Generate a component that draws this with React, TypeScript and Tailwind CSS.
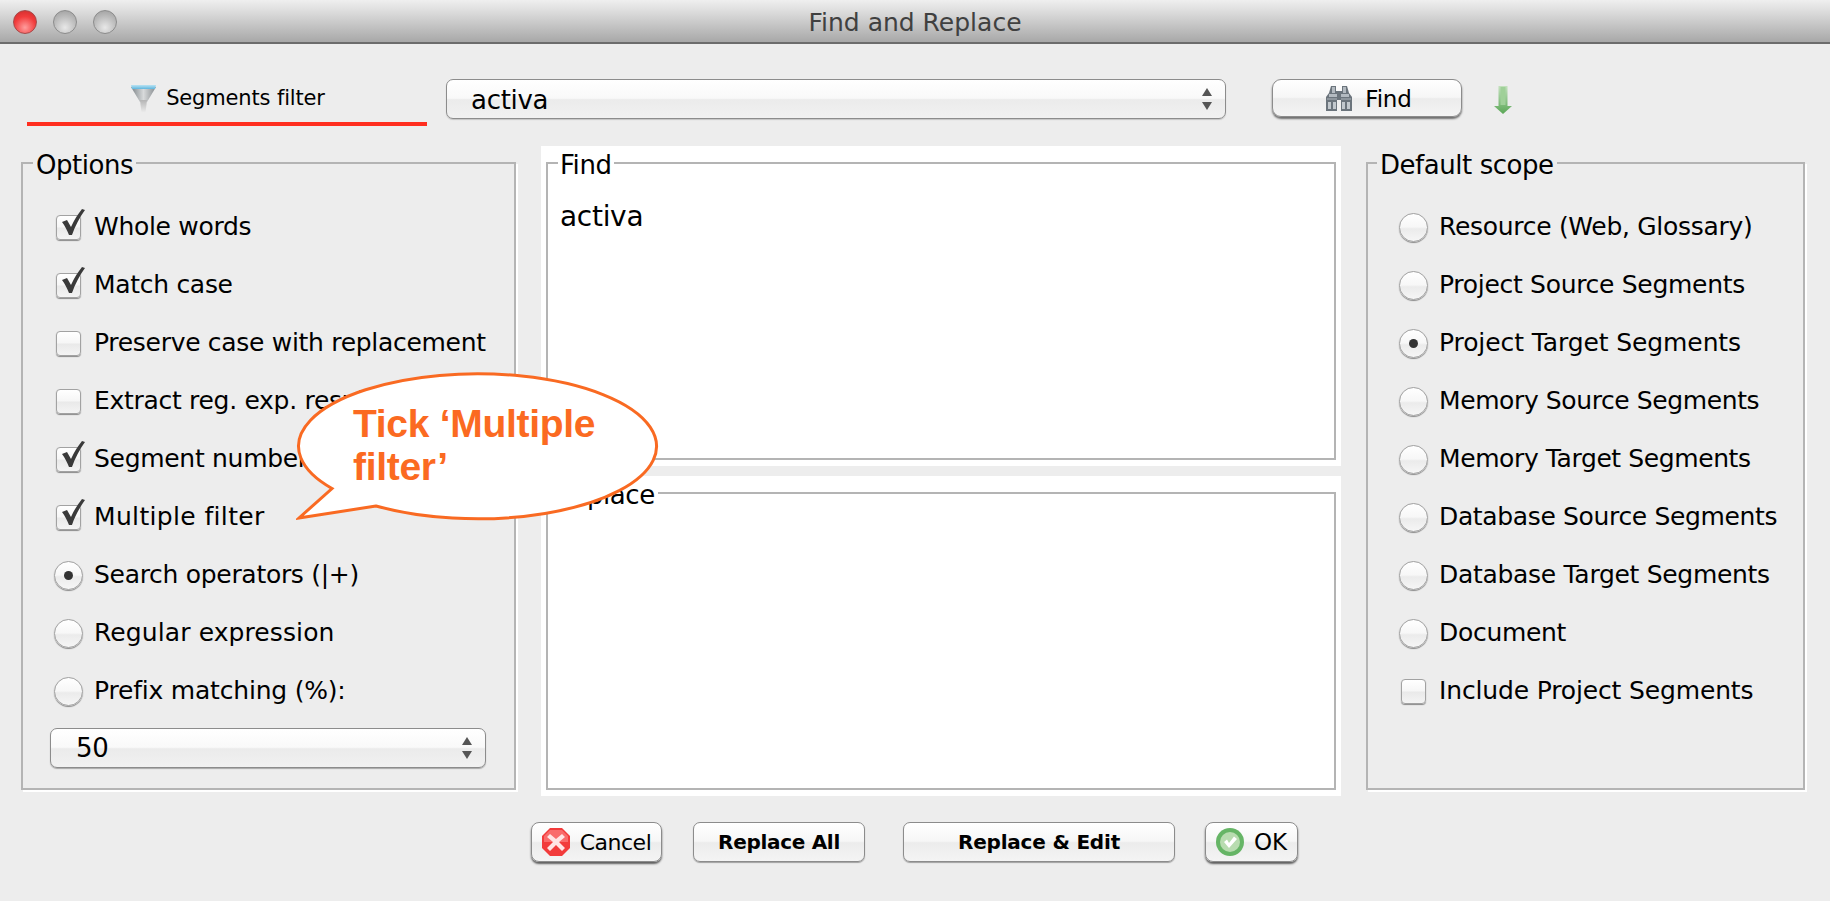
import React from 'react';

const leftRows = [
  { kind: 'check', on: true, label: 'Whole words' },
  { kind: 'check', on: true, label: 'Match case' },
  { kind: 'check', on: false, label: 'Preserve case with replacement' },
  { kind: 'check', on: false, label: 'Extract reg. exp. results' },
  { kind: 'check', on: true, label: 'Segment numbers' },
  { kind: 'check', on: true, label: 'Multiple filter', track: 'tracking-[0.35px]' },
  { kind: 'radio', on: true, label: 'Search operators (|+)' },
  { kind: 'radio', on: false, label: 'Regular expression', track: 'tracking-[0.1px]' },
  { kind: 'radio', on: false, label: 'Prefix matching (%):', track: 'tracking-[-0.2px]' },
];

const rightRows = [
  { kind: 'radio', on: false, label: 'Resource (Web, Glossary)' },
  { kind: 'radio', on: false, label: 'Project Source Segments' },
  { kind: 'radio', on: true, label: 'Project Target Segments', track: 'tracking-[-0.1px]' },
  { kind: 'radio', on: false, label: 'Memory Source Segments', track: 'tracking-[-0.4px]' },
  { kind: 'radio', on: false, label: 'Memory Target Segments', track: 'tracking-[-0.4px]' },
  { kind: 'radio', on: false, label: 'Database Source Segments', track: 'tracking-[-0.35px]' },
  { kind: 'radio', on: false, label: 'Database Target Segments' },
  { kind: 'radio', on: false, label: 'Document' },
  { kind: 'check', on: false, label: 'Include Project Segments', track: 'tracking-[-0.15px]' },
];

const Check = ({ on }: { on: boolean }) => (
  <span className="relative block w-[25px] h-[25px] rounded-[4px] border border-[#a2a2a2] bg-[linear-gradient(#ffffff,#f6f6f6_48%,#e9e9e9_52%,#f4f4f4)] shadow-[0_1px_1px_#8a8a8a]">
    {on && (
      <svg className="absolute left-[4px] top-[-8px]" width="26" height="28" viewBox="0 0 26 28">
        <path d="M1 14 L6 12 L10 19 C13 12 17 6 21 1 L24 2 C19 9 14 18 11 27 L8 27 C6 22 4 18 1 14 Z" fill="#3a3a3a" />
      </svg>
    )}
  </span>
);

const Radio = ({ on }: { on: boolean }) => (
  <span className="flex items-center justify-center w-[29px] h-[29px] rounded-full border border-[#a0a0a0] bg-[linear-gradient(#ffffff,#f7f7f7_48%,#ebebeb_55%,#f6f6f6)] shadow-[0_1px_1px_#8a8a8a]">
    {on && <span className="w-[9px] h-[9px] rounded-full bg-[#333333]" />}
  </span>
);

const Row = ({ kind, on, label, track }: { kind: string; on: boolean; label: string; track?: string }) => (
  <div className="flex items-center h-[58px]">
    <span className="flex items-center justify-center w-[30px]">
      {kind === 'check' ? <Check on={on} /> : <Radio on={on} />}
    </span>
    <span className={`ml-[11px] whitespace-nowrap text-[25px] text-black ${track ?? 'tracking-[-0.3px]'}`}>{label}</span>
  </div>
);

const UpDown = () => (
  <svg width="12" height="24" viewBox="0 0 12 24">
    <path d="M6 1 L11 9 L1 9 Z" fill="#555555" />
    <path d="M1 15 L11 15 L6 23 Z" fill="#555555" />
  </svg>
);

const Funnel = () => (
  <svg width="25" height="28" viewBox="0 0 25 28">
    <defs>
      <linearGradient id="fb" x1="0" y1="0" x2="1" y2="0">
        <stop offset="0" stopColor="#7d8488" />
        <stop offset="0.5" stopColor="#d8dadb" />
        <stop offset="1" stopColor="#868b8e" />
      </linearGradient>
      <linearGradient id="ft" x1="0" y1="0" x2="0" y2="1">
        <stop offset="0" stopColor="#b9e3f3" />
        <stop offset="1" stopColor="#5fb6de" />
      </linearGradient>
      <linearGradient id="fs" x1="0" y1="0" x2="0" y2="1">
        <stop offset="0" stopColor="#b4b4b4" />
        <stop offset="1" stopColor="#efefef" />
      </linearGradient>
    </defs>
    <path d="M0 2 L25 2 L16 17 L9 17 Z" fill="url(#fb)" />
    <path d="M9 15 L16 15 L14.5 28 L10.5 28 Z" fill="url(#fs)" />
    <path d="M0 0 L25 0 L24 4 L1 4 Z" fill="url(#ft)" />
  </svg>
);

const Binoculars = () => (
  <svg width="26" height="25" viewBox="0 0 26 25">
    <path d="M5 0 H10 V5 H16 V0 H21 L23 7 L26 11 V25 H15 V14 H11 V25 H0 V11 L3 7 Z" fill="#6b747c" />
    <path d="M6 1 H9 V7 H6 Z M17 1 H20 V7 H17 Z M3 8 H11 V11 H3 Z M15 8 H23 V11 H15 Z" fill="#b3bac0" />
    <path d="M1 12 H11 V14 H1 Z M15 12 H25 V14 H15 Z" fill="#8d959c" />
    <path d="M2 16 H5 V23 H2 Z M7 16 H10 V23 H7 Z M16 16 H19 V23 H16 Z M21 16 H24 V23 H21 Z" fill="#c2c8cd" />
  </svg>
);

const GreenArrow = () => (
  <svg width="18" height="28" viewBox="0 0 18 28">
    <defs>
      <linearGradient id="ga" x1="0" y1="0" x2="0" y2="1">
        <stop offset="0" stopColor="#c3e1bd" />
        <stop offset="1" stopColor="#5aa756" />
      </linearGradient>
    </defs>
    <path d="M4.5 0 H13.5 V20 H18 L9 28 L0 20 H4.5 Z" fill="url(#ga)" />
    <path d="M6.5 1 H11.5 V19 H6.5 Z" fill="#9fd098" />
  </svg>
);

const CancelIcon = () => (
  <svg width="28" height="28" viewBox="0 0 28 28">
    <path d="M8 0 H20 L28 8 V20 L20 28 H8 L0 20 V8 Z" fill="#f23b3b" />
    <path d="M8 2 H20 L26 8 V14 H2 V8 Z" fill="#f96b6b" />
    <path d="M8 6 L14 11 L20 6 L23 9 L17 14 L23 20 L20 23 L14 17 L8 23 L5 20 L11 14 L5 9 Z" fill="#ffe4e4" />
  </svg>
);

const OkIcon = () => (
  <svg width="28" height="28" viewBox="0 0 28 28">
    <circle cx="14" cy="14" r="14" fill="#66b566" />
    <circle cx="14" cy="14" r="10" fill="#b8dcb0" />
    <path d="M8 14 L11 11.5 L13 15 L18 8.5 L21 11 L13 20 Z" fill="#ffffff" />
  </svg>
);

const Callout = () => (
  <div className="absolute left-[296px] top-[372px] w-[364px] h-[150px]">
    <svg className="absolute inset-0" width="364" height="150" viewBox="0 0 364 150">
      <path d="M80 134 L3 146 L36 116.5 A179 72.5 0 1 1 80 134 Z" fill="#ffffff" stroke="#f96a22" strokeWidth="3" strokeLinejoin="miter" />
    </svg>
    <div className="absolute left-[57px] top-[30px] whitespace-nowrap [font-family:'Liberation_Sans',Arial,sans-serif] font-bold text-[39px] leading-[43px] tracking-[-0.3px] text-[#fb6a21]">
      Tick ‘Multiple<br />filter’
    </div>
  </div>
);

const Legend = ({ children, className }: { children: React.ReactNode; className: string }) => (
  <legend className={`pt-[4px] text-[26px] leading-[26px] tracking-[-0.45px] text-black ${className}`}>{children}</legend>
);

export default function App() {
  return (
    <div className="relative w-[1830px] h-[901px] overflow-hidden bg-[#ededed] [font-family:'DejaVu_Sans',sans-serif]">
      {/* title bar */}
      <div className="relative flex items-center justify-center h-[44px] border-b-2 border-[#6c6c6c] bg-[linear-gradient(#efefef,#dedede_25%,#a8a8a8)]">
        <div className="absolute left-[13px] top-[10px] flex gap-[16px]">
          <span className="w-[24px] h-[24px] rounded-full border border-[#a64a4a] bg-[radial-gradient(circle_at_50%_75%,#ff9d9d,#f23c3c_55%,#c92b2b)]" />
          <span className="w-[24px] h-[24px] rounded-full border border-[#8c8c8c] bg-[radial-gradient(circle_at_50%_75%,#e8e8e8,#bcbcbc_55%,#9a9a9a)]" />
          <span className="w-[24px] h-[24px] rounded-full border border-[#8c8c8c] bg-[radial-gradient(circle_at_50%_75%,#e8e8e8,#bcbcbc_55%,#9a9a9a)]" />
        </div>
        <span className="pt-[4px] text-[25px] text-[#404040]">Find and Replace</span>
      </div>

      {/* filter row */}
      <div className="flex items-start pt-[35px] h-[102px]">
        <div className="flex items-center justify-center gap-[10px] ml-[27px] w-[400px] h-[47px] pb-[3px] pl-[2px] border-b-[4px] border-[#ff2e1f]">
          <Funnel />
          <span className="text-[21px] tracking-[-0.15px] text-black">Segments filter</span>
        </div>
        <div className="flex items-center justify-between ml-[19px] w-[780px] h-[40px] pl-[24px] pr-[12px] rounded-[7px] border border-[#8c8c8c] bg-[linear-gradient(#ffffff,#f9f9f9_48%,#ebebeb_52%,#f1f1f1)] shadow-[0_1px_1px_#c4c4c4]">
          <span className="pt-[3px] text-[26px] tracking-[-0.3px] text-black">activa</span>
          <UpDown />
        </div>
        <button className="flex items-center justify-center gap-[13px] ml-[46px] pl-[4px] w-[190px] h-[38px] rounded-[9px] border border-[#8c8c8c] bg-[linear-gradient(#ffffff,#f6f6f6_48%,#ececec_52%,#f4f4f4)] shadow-[0_2px_2px_#6f6f6f]">
          <Binoculars />
          <span className="pt-[2px] text-[23px] tracking-[-0.2px] text-black">Find</span>
        </button>
        <span className="ml-[32px] mt-[7px]"><GreenArrow /></span>
      </div>

      {/* panels */}
      <div className="flex items-start gap-[25px] pl-[21px]">
        <fieldset className="w-[495px] h-[642px] mt-[2px] border-2 border-[#b4b4b4] shadow-[2px_2px_0_#ffffff]">
          <Legend className="ml-[10px] px-[3px]">Options</Legend>
          <div className="pl-[30px] pt-[20px]">
            {leftRows.map((r) => <Row key={r.label} {...r} />)}
            <div className="flex items-center justify-between mt-[8px] -ml-[3px] w-[436px] h-[40px] pl-[25px] pr-[12px] rounded-[7px] border border-[#8c8c8c] bg-[linear-gradient(#ffffff,#f9f9f9_48%,#ebebeb_52%,#f1f1f1)] shadow-[0_1px_1px_#a8a8a8]">
              <span className="text-[26px] tracking-[-0.3px] text-black">50</span>
              <UpDown />
            </div>
          </div>
        </fieldset>

        <div className="flex flex-col gap-[10px] w-[800px]">
          <div className="h-[320px] px-[5px] pt-[2px] bg-white">
            <fieldset className="h-[312px] border-2 border-[#b4b4b4]">
              <Legend className="ml-[10px] pl-[2px] pr-[3px]">Find</Legend>
              <div className="pl-[12px] pt-[24px] text-[28px] leading-[30px] tracking-[-0.3px] text-black">activa</div>
            </fieldset>
          </div>
          <div className="h-[320px] px-[5px] pt-[2px] bg-white">
            <fieldset className="h-[312px] border-2 border-[#b4b4b4]">
              <Legend className="ml-[5px] pl-[2px] pr-[3px]">Replace</Legend>
            </fieldset>
          </div>
        </div>

        <fieldset className="w-[439px] h-[642px] mt-[2px] border-2 border-[#b4b4b4] shadow-[2px_2px_0_#ffffff]">
          <Legend className="ml-[9px] px-[3px]">Default scope</Legend>
          <div className="pl-[30px] pt-[20px]">
            {rightRows.map((r) => <Row key={r.label} {...r} />)}
          </div>
        </fieldset>
      </div>

      {/* buttons */}
      <div className="flex items-start pt-[26px] pl-[531px]">
        <button className="flex items-center justify-center gap-[10px] w-[131px] h-[40px] rounded-[8px] border border-[#8c8c8c] bg-[linear-gradient(#ffffff,#f6f6f6_48%,#ececec_52%,#f4f4f4)] shadow-[0_2px_2px_#5f5f5f]">
          <CancelIcon />
          <span className="text-[22px] tracking-[-0.5px] text-black">Cancel</span>
        </button>
        <button className="ml-[31px] w-[172px] h-[40px] rounded-[7px] border border-[#8c8c8c] bg-[linear-gradient(#ffffff,#f6f6f6_48%,#ececec_52%,#f4f4f4)] shadow-[0_1px_1px_#a0a0a0] text-[20px] font-bold tracking-[-0.3px] text-black">
          Replace All
        </button>
        <button className="ml-[38px] w-[272px] h-[40px] rounded-[7px] border border-[#8c8c8c] bg-[linear-gradient(#ffffff,#f6f6f6_48%,#ececec_52%,#f4f4f4)] shadow-[0_1px_1px_#a0a0a0] text-[20px] font-bold tracking-[-0.2px] text-black">
          Replace &amp; Edit
        </button>
        <button className="flex items-center justify-center gap-[10px] ml-[30px] w-[93px] h-[40px] rounded-[8px] border border-[#8c8c8c] bg-[linear-gradient(#ffffff,#f6f6f6_48%,#ececec_52%,#f4f4f4)] shadow-[0_2px_2px_#5f5f5f]">
          <OkIcon />
          <span className="text-[23px] text-black">OK</span>
        </button>
      </div>

      <Callout />
    </div>
  );
}
